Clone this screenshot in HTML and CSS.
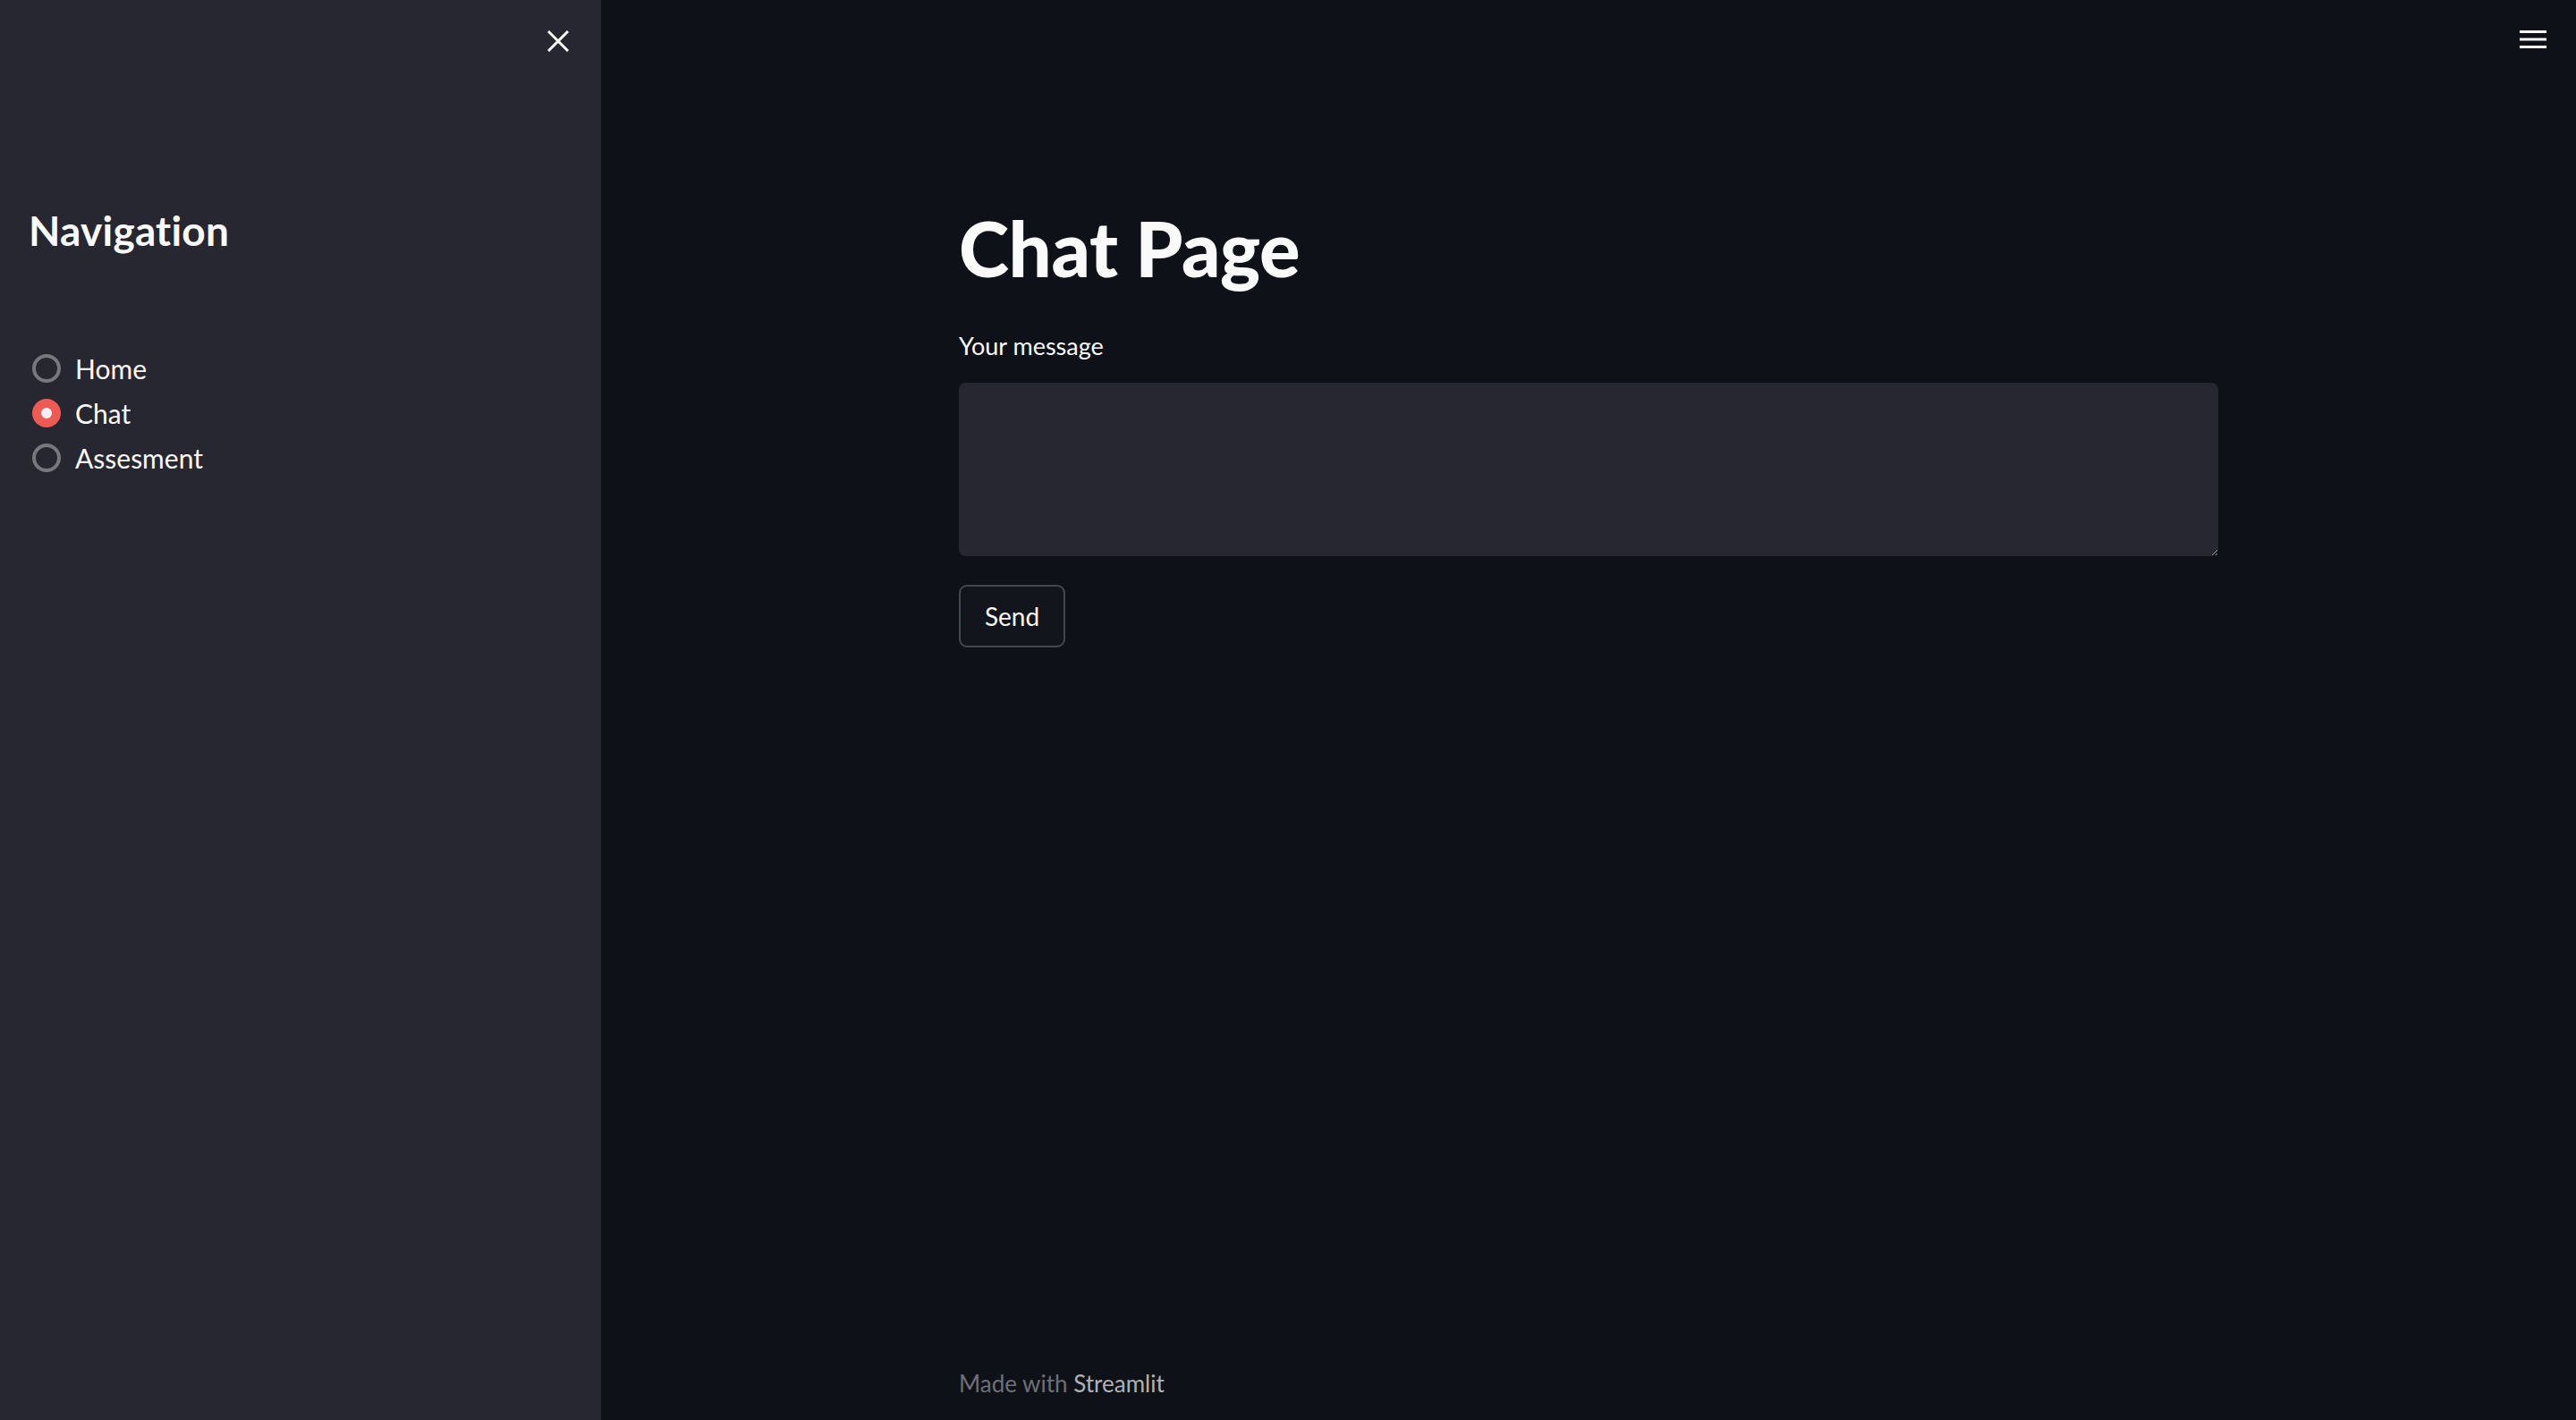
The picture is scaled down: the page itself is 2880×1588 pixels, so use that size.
FILE: index.html
```html
<!DOCTYPE html>
<html lang="en">

<head>
    <meta charset="UTF-8">
    <meta name="viewport" content="width=device-width, initial-scale=1.0">
    <title>Chat Page</title>
    <link rel="stylesheet" href="styles.css">
</head>

<body>
    <div class="app">
        <aside class="sidebar">
            <div class="sidebar-top">
                <button class="close-btn" aria-label="Close sidebar">
                    <svg width="24" height="24" viewBox="0 0 24 24">
                        <path d="M2 2 L22 22 M22 2 L2 22" stroke="#fafafa" stroke-width="3" stroke-linecap="square" fill="none"/>
                    </svg>
                </button>
            </div>
            <h1 class="side-title">Navigation</h1>
            <div class="radio-group">
                <label class="radio">
                    <input type="radio" name="page" value="Home">
                    <span class="dot"></span>
                    <span class="radio-text">Home</span>
                </label>
                <label class="radio">
                    <input type="radio" name="page" value="Chat" checked>
                    <span class="dot"></span>
                    <span class="radio-text">Chat</span>
                </label>
                <label class="radio">
                    <input type="radio" name="page" value="Assesment">
                    <span class="dot"></span>
                    <span class="radio-text">Assesment</span>
                </label>
            </div>
        </aside>

        <main class="main">
            <button class="menu-btn" aria-label="Menu">
                <svg width="30" height="20" viewBox="0 0 30 20">
                    <rect x="0" y="0" width="30" height="3" fill="#fafafa"/>
                    <rect x="0" y="8.5" width="30" height="3" fill="#fafafa"/>
                    <rect x="0" y="17" width="30" height="3" fill="#fafafa"/>
                </svg>
            </button>

            <div class="content">
                <h1 class="title">Chat Page</h1>
                <label class="field-label" for="msg">Your message</label>
                <textarea id="msg" class="message"></textarea>
                <button class="send-btn" type="button">Send</button>
            </div>

            <footer class="footer">
                Made with <span class="brand">Streamlit</span>
            </footer>
        </main>
    </div>
</body>

</html>
```

FILE: styles.css
```css
* {
    margin: 0;
    padding: 0;
    box-sizing: border-box;
}

body {
    font-family: Lato, 'Noto Sans', sans-serif;
    background-color: #0e1117;
    color: #fafafa;
}

.app {
    display: flex;
    height: 100vh;
    overflow: hidden;
}

.sidebar {
    width: 672px;
    flex-shrink: 0;
    background-color: #262730;
    padding: 0 32px;
}

.sidebar-top {
    height: 92px;
    display: flex;
    justify-content: flex-end;
    align-items: center;
    margin-right: -4px;
}

.close-btn {
    width: 40px;
    height: 40px;
    display: flex;
    align-items: center;
    justify-content: center;
    background: none;
    border: none;
    cursor: pointer;
}

.side-title {
    margin-top: 138px;
    font-size: 46px;
    font-weight: 700;
    line-height: 1.2;
    letter-spacing: 0.2px;
}

.radio-group {
    margin-top: 102px;
    display: flex;
    flex-direction: column;
}

.radio {
    height: 50px;
    display: flex;
    align-items: center;
    gap: 16px;
    padding-left: 4px;
    cursor: pointer;
}

.radio input {
    display: none;
}

.dot {
    width: 32px;
    height: 32px;
    border-radius: 50%;
    border: 4px solid #77787e;
    display: flex;
    align-items: center;
    justify-content: center;
}

.radio input:checked + .dot {
    border: none;
    background-color: #ef5a55;
}

.radio input:checked + .dot::after {
    content: "";
    width: 12px;
    height: 12px;
    border-radius: 50%;
    background-color: #f0f2f6;
}

.radio-text {
    font-size: 30px;
    line-height: 1.2;
}

.main {
    flex: 1;
    position: relative;
    display: flex;
    flex-direction: column;
    align-items: center;
}

.menu-btn {
    position: absolute;
    top: 34px;
    right: 33px;
    background: none;
    border: none;
    cursor: pointer;
    display: flex;
}

.content {
    width: 1408px;
    padding-top: 226px;
    display: flex;
    flex-direction: column;
    align-items: flex-start;
}

.title {
    font-size: 85px;
    font-weight: 900;
    line-height: 1.2;
    letter-spacing: -0.4px;
}

.field-label {
    margin-top: 43px;
    font-size: 27px;
    line-height: 1.2;
}

.message {
    margin-top: 25px;
    width: 100%;
    height: 194px;
    background-color: #262730;
    border: none;
    border-radius: 8px;
    color: #fafafa;
    font-family: Lato, 'Noto Sans', sans-serif;
    font-size: 30px;
    padding: 16px 20px;
    outline: none;
    color-scheme: dark;
    resize: vertical;
}

.send-btn {
    margin-top: 32px;
    width: 119px;
    height: 70px;
    background-color: #12151c;
    border: 2px solid #44474e;
    border-radius: 9px;
    color: #fafafa;
    font-family: Lato, 'Noto Sans', sans-serif;
    font-size: 28px;
    cursor: pointer;
}

.footer {
    margin-top: auto;
    width: 1408px;
    padding-bottom: 25px;
    font-size: 26px;
    line-height: 1.2;
    color: #6e7075;
}

.brand {
    color: #b0b1b4;
}
```
